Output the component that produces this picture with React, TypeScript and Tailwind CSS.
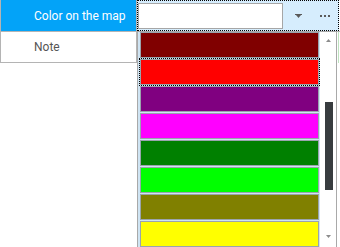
import React from "react";

const colors = [
  "#800000",
  "#ff0000",
  "#800080",
  "#ff00ff",
  "#008000",
  "#00ff00",
  "#808000",
  "#ffff00",
];

export default function App() {
  return (
    <div className="relative w-[340px] h-[247px] bg-white overflow-hidden font-['Roboto',sans-serif]">
      <div className="flex flex-col w-[340px]">
        <div className="flex h-[32px]">
          <div className="w-[137px] h-[32px] border-l border-r border-b border-[#b4b4b4] bg-[#03a3f8] text-white text-[12px] pl-[33px] flex items-center">
            Color on the map
          </div>
          <div className="w-[203px] h-[32px] border-b border-[#b4b4b4] flex items-start">
            <div className="w-[202px] h-[31px] border border-dotted border-black bg-[#d6edfd] flex items-start">
              <div className="mt-[2px] w-[145px] h-[26px] bg-white border border-[#a6a6a6]" />
              <div className="h-[29px] flex items-center pl-[12px]">
                <svg width="7" height="4" viewBox="0 0 7 4">
                  <rect x="0" y="0" width="7" height="1" fill="#5a5a5a" />
                  <polygon points="1,1 6,1 3.5,4" fill="#5a5a5a" />
                </svg>
                <svg className="ml-[18px]" width="10" height="2" viewBox="0 0 10 2">
                  <rect x="0" y="0" width="2" height="2" fill="#5a5a5a" />
                  <rect x="4" y="0" width="2" height="2" fill="#5a5a5a" />
                  <rect x="8" y="0" width="2" height="2" fill="#5a5a5a" />
                </svg>
              </div>
            </div>
          </div>
        </div>
        <div className="flex h-[31px]">
          <div className="w-[137px] h-[31px] border-l border-r border-b border-[#b4b4b4] bg-white text-[#555555] text-[12px] pl-[33px] flex items-center">
            Note
          </div>
          <div className="w-[202px] h-[31px] border-r border-[#bfe3c0]" />
        </div>
      </div>

      <div className="absolute left-[137px] top-[31px] w-[200px] h-[220px] border-l border-t border-r border-[#a9a9a9] bg-[#cfe4f3] flex">
        <div className="flex flex-col pl-[2px] pr-[1px] w-[182px]">
          {colors.map((c, i) => (
            <div
              key={c}
              className={
                i === 1
                  ? "w-[179px] h-[26px] mb-[1px] border border-[#9aa4ad] outline-1 outline-dotted outline-black"
                  : "w-[179px] h-[26px] mb-[1px] border border-[#9aa4ad]"
              }
              style={{ backgroundColor: c }}
            />
          ))}
        </div>
        <div className="w-[16px] h-[219px] bg-white flex flex-col">
          <div className="h-[16px] flex items-center justify-center pl-[1px]">
            <svg width="5" height="3" viewBox="0 0 5 3">
              <polygon points="0,3 5,3 2.5,0" fill="#8c8c8c" />
            </svg>
          </div>
          <div className="mt-[54px] ml-[5px] w-[8px] h-[88px] bg-[#383c3f]" />
          <div className="mt-[38px] h-[16px] flex items-center justify-center pl-[1px]">
            <svg width="5" height="3" viewBox="0 0 5 3">
              <polygon points="0,0 5,0 2.5,3" fill="#8c8c8c" />
            </svg>
          </div>
        </div>
      </div>
    </div>
  );
}
